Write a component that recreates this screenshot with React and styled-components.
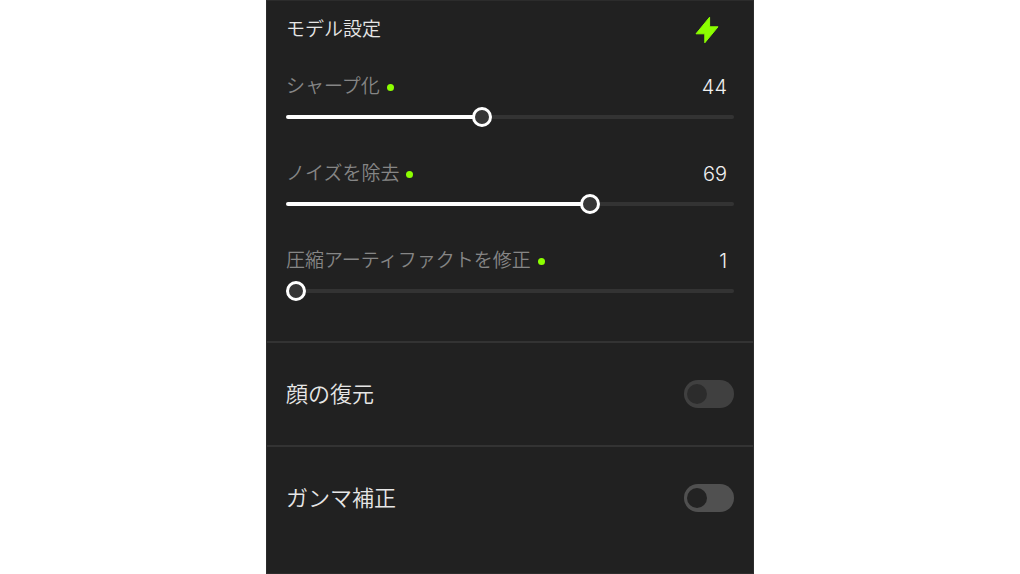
import React, { useState } from 'react';
import styled, { createGlobalStyle } from 'styled-components';

const MIN = 1;
const MAX = 100;

function Slider({ id, label, defaultValue }) {
  const [value, setValue] = useState(defaultValue);
  const ratio = (value - MIN) / (MAX - MIN);

  return (
    <SliderGroup>
      <SliderHead>
        <SliderLabel htmlFor={id}>{label}</SliderLabel>
        <Dot />
        <SliderValue htmlFor={id}>{value}</SliderValue>
      </SliderHead>
      <Range
        type="range"
        id={id}
        min={MIN}
        max={MAX}
        value={value}
        style={{ '--fill': `${ratio * 100}%` }}
        onChange={(e) => {
          setValue(Number(e.target.value));
        }}
      />
    </SliderGroup>
  );
}

function App() {
  const [gamma, setGamma] = useState(false);

  return (
    <>
      <GlobalStyle />
      <Panel>
        <ModelSection>
          <ModelHead>
            <ModelTitle>モデル設定</ModelTitle>
            <AutoButton type="button" aria-label="自動">
              <svg width="24" height="28" viewBox="0 0 24 28" fill="#8cff00" stroke="#8cff00" strokeWidth="1" strokeLinejoin="round">
                <path d="M14.6 1.2V10.8H23L9.8 26.8V17.8H1Z" />
              </svg>
            </AutoButton>
          </ModelHead>
          <Slider id="sharpen" label="シャープ化" defaultValue={44} />
          <Slider id="denoise" label="ノイズを除去" defaultValue={69} />
          <Slider id="compression" label="圧縮アーティファクトを修正" defaultValue={1} />
        </ModelSection>
        <ToggleSection>
          <ToggleLabel htmlFor="face">顔の復元</ToggleLabel>
          <Toggle type="checkbox" role="switch" id="face" disabled />
        </ToggleSection>
        <ToggleSection>
          <ToggleLabel htmlFor="gamma">ガンマ補正</ToggleLabel>
          <Toggle
            type="checkbox"
            role="switch"
            id="gamma"
            checked={gamma}
            onChange={(e) => {
              setGamma(e.target.checked);
            }}
          />
        </ToggleSection>
      </Panel>
    </>
  );
}

export default App;

const GlobalStyle = createGlobalStyle`
  * {
    box-sizing: border-box;
  }

  body {
    margin: 0;
    background-color: #fff;
    font-family: Inter, 'Noto Sans CJK JP', sans-serif;
    font-weight: 350;
  }
`;

const Panel = styled.main`
  display: flex;
  flex-direction: column;
  max-width: 488px;
  min-height: 100vh;
  margin: 0 auto;
  border: 1px solid #2c2c2c;
  background-color: #212121;
`;

const ModelSection = styled.section`
  display: flex;
  flex-direction: column;
  padding: 15px 19px 40px;
`;

const ModelHead = styled.div`
  display: flex;
  align-items: center;
  justify-content: space-between;
  height: 28px;
  margin-bottom: 29px;
  padding-right: 15px;
`;

const ModelTitle = styled.h1`
  margin: 0;
  font-size: 19px;
  font-weight: 350;
  line-height: 28px;
  color: #e6e6e6;
`;

const AutoButton = styled.button`
  display: flex;
  padding: 0;
  border: none;
  background: none;
  cursor: pointer;

  svg {
    display: block;
  }
`;

const SliderGroup = styled.div`
  display: flex;
  flex-direction: column;
  gap: 6px;
  margin-bottom: 33px;

  &:last-child {
    margin-bottom: 0;
  }
`;

const SliderHead = styled.div`
  display: flex;
  align-items: center;
  height: 28px;
  padding-right: 7px;
`;

const SliderLabel = styled.label`
  font-size: 19px;
  line-height: 28px;
  color: #868686;
`;

const Dot = styled.span`
  width: 7px;
  height: 7px;
  margin-left: 7px;
  border-radius: 50%;
  background-color: #8cff00;
`;

const SliderValue = styled.output`
  margin-left: auto;
  font-size: 20px;
  line-height: 28px;
  color: #f0f0f0;
`;

const Range = styled.input`
  appearance: none;
  width: 100%;
  height: 20px;
  margin: 0;
  background: none;
  cursor: pointer;

  &::-webkit-slider-runnable-track {
    height: 4px;
    border-radius: 2px;
    background: linear-gradient(to right, #fff var(--fill), #333 var(--fill));
  }

  &::-webkit-slider-thumb {
    appearance: none;
    width: 20px;
    height: 20px;
    margin-top: -8px;
    border: 3px solid #fff;
    border-radius: 50%;
    background-color: #363636;
  }
`;

const ToggleSection = styled.section`
  display: flex;
  align-items: center;
  justify-content: space-between;
  height: 104px;
  padding: 0 19px;
  border-top: 2px solid #333;
`;

const ToggleLabel = styled.label`
  font-size: 22px;
  line-height: 32px;
  color: #e6e6e6;
`;

const Toggle = styled.input`
  appearance: none;
  display: flex;
  align-items: center;
  width: 50px;
  height: 28px;
  margin: 0;
  padding: 0 3px;
  border-radius: 14px;
  background-color: #505050;
  cursor: pointer;

  &::before {
    content: '';
    width: 20px;
    height: 20px;
    border-radius: 50%;
    background-color: #232323;
  }

  &:checked {
    justify-content: flex-end;
    background-color: #8cff00;
  }

  &:disabled {
    background-color: #404040;
    cursor: default;
  }

  &:disabled::before {
    background-color: #2c2c2c;
  }
`;
